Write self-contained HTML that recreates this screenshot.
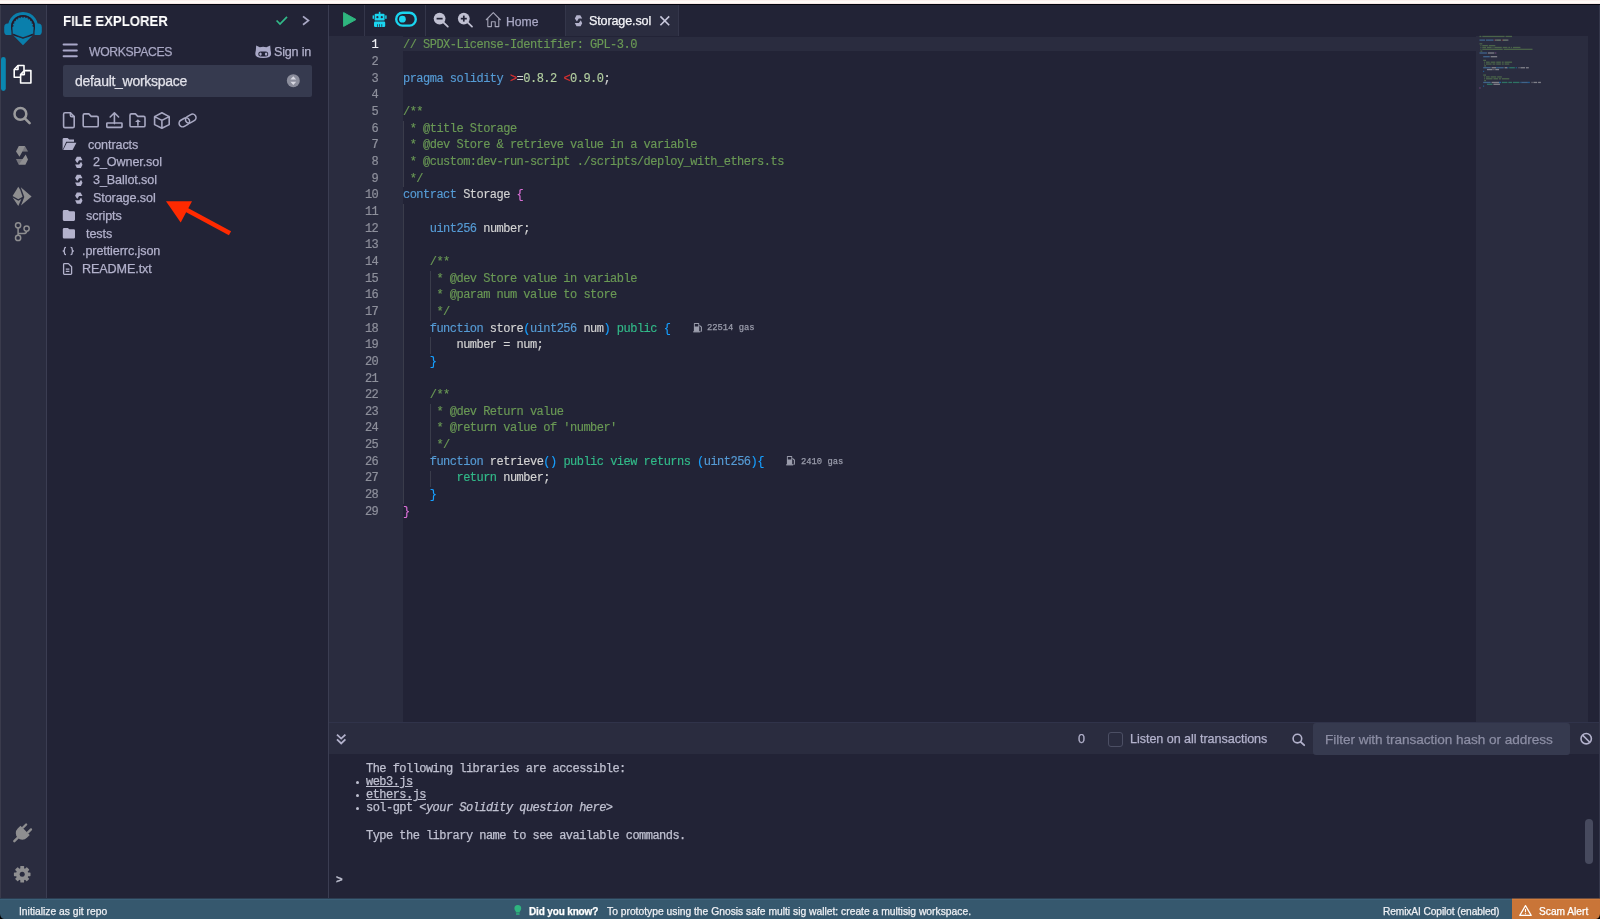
<!DOCTYPE html>
<html><head><meta charset="utf-8">
<style>
*{margin:0;padding:0;box-sizing:border-box}
html,body{width:1600px;height:919px;overflow:hidden;background:#222336;font-family:"Liberation Sans",sans-serif;color:#babbcc}
.abs{position:absolute}
.t{position:absolute;white-space:pre;will-change:transform;-webkit-text-stroke:0.25px currentColor}
#topstrip{left:0;top:0;width:1600px;height:4px;background:linear-gradient(#fcf0ee 0,#fcf0ee 1px,#fefaf7 1px,#fefaf7 3px,#f6e6e4 3px)}
#topline{left:0;top:4px;width:1600px;height:1px;background:#03030d}
#iconpanel{left:0;top:5px;width:46px;height:893px;background:#2a2c3f}
#iconedge{left:0;top:5px;width:1px;height:893px;background:#3a3b4c}
#iconborder{left:46px;top:5px;width:1px;height:893px;background:#3b3d52}
#sideborder{left:328px;top:5px;width:1px;height:893px;background:#3b3d52}
#statusbar{left:0;top:898px;width:1600px;height:21px;background:#36586e}
#scam{left:1512px;top:898px;width:88px;height:21px;background:#c97538}
#gutter{left:329px;top:36px;width:74px;height:686px;background:#2a2c3f}
#minimap{left:1476px;top:36px;width:112px;height:686px;background:#2a2c3f}
#linehl{left:403px;top:37px;width:1073px;height:14px;background:#2a2c3f}
#termbar{left:329px;top:722px;width:1271px;height:32px;background:#2a2c3f;border-top:1px solid #30334a}
#tab{left:565px;top:5px;width:114px;height:31px;background:#2a2c3f;border-left:1px solid #34364a;border-right:1px solid #34364a}
#select{left:63px;top:64.5px;width:248.5px;height:32px;background:#363a4f;border-radius:2px}
#filter{left:1313px;top:722.5px;width:257px;height:32px;background:#363a4f;border-radius:3px}
#chk{left:1108px;top:731.5px;width:15px;height:15px;border:1px solid #4c4f64;border-radius:3px}
#thumb{left:1585px;top:819px;width:7.5px;height:44.5px;background:#474a5e;border-radius:4px}
.div1{position:absolute;top:5px;width:1px;height:31px;background:#34364a}
.cl{position:absolute;will-change:transform;-webkit-text-stroke:0.15px currentColor;left:403.3px;font-family:"Liberation Mono",monospace;font-size:12px;letter-spacing:-0.52px;line-height:16.66px;white-space:pre}
.ln{position:absolute;will-change:transform;-webkit-text-stroke:0.2px currentColor;left:340px;width:38.3px;text-align:right;font-family:"Liberation Mono",monospace;font-size:12px;letter-spacing:-0.52px;line-height:16.66px}
</style></head><body>
<div id="topstrip" class="abs"></div>
<div id="topline" class="abs"></div>
<div id="iconpanel" class="abs"></div>
<div id="iconedge" class="abs"></div>
<div id="iconborder" class="abs"></div>
<div id="sideborder" class="abs"></div>
<div id="gutter" class="abs"></div>
<div id="minimap" class="abs"></div>
<div id="linehl" class="abs"></div>
<div id="termbar" class="abs"></div>
<div id="statusbar" class="abs"></div>
<div id="scam" class="abs"></div>
<div id="tab" class="abs"></div>
<div class="abs" style="left:1599px;top:5px;width:1px;height:893px;background:#34364a"></div>
<div class="abs" style="left:0;top:898px;width:1512px;height:1px;background:#2c3e52"></div>
<div class="abs" style="left:1512px;top:898px;width:88px;height:1px;background:#6f4e3e"></div>
<div class="abs" style="left:0;top:899px;width:1512px;height:1px;background:#3b6079"></div>
<div class="abs" style="left:1512px;top:899px;width:88px;height:1px;background:#d47d3c"></div>
<div class="div1" style="left:364px"></div>
<div class="div1" style="left:424.5px"></div>
<div id="select" class="abs"></div>
<div id="filter" class="abs"></div>
<div id="chk" class="abs"></div>
<div id="thumb" class="abs"></div>
<div class="abs" style="left:403px;top:120.6px;width:1px;height:66.6px;background:#3a3c4b"></div>
<div class="abs" style="left:403px;top:203.9px;width:1px;height:299.9px;background:#3a3c4b"></div>
<div class="abs" style="left:430px;top:270.5px;width:1px;height:50.0px;background:#3a3c4b"></div>
<div class="abs" style="left:430px;top:337.2px;width:1px;height:16.7px;background:#3a3c4b"></div>
<div class="abs" style="left:430px;top:403.8px;width:1px;height:50.0px;background:#3a3c4b"></div>
<div class="abs" style="left:430px;top:470.5px;width:1px;height:16.7px;background:#3a3c4b"></div>
<div class="cl" style="top:37.30px"><span style="color:#6a9955">// SPDX-License-Identifier: GPL-3.0</span></div>
<div class="ln" style="top:37.30px;color:#f0f0f5">1</div>
<div class="cl" style="top:53.96px"></div>
<div class="ln" style="top:53.96px;color:#8e909c">2</div>
<div class="cl" style="top:70.62px"><span style="color:#569cd6">pragma</span><span style="color:#d4d4d4"> </span><span style="color:#569cd6">solidity</span><span style="color:#d4d4d4"> </span><span style="color:#e03030">&gt;</span><span style="color:#d4d4d4">=</span><span style="color:#b3cfa0">0.8.2</span><span style="color:#d4d4d4"> </span><span style="color:#e03030">&lt;</span><span style="color:#b3cfa0">0.9.0</span><span style="color:#d4d4d4">;</span></div>
<div class="ln" style="top:70.62px;color:#8e909c">3</div>
<div class="cl" style="top:87.28px"></div>
<div class="ln" style="top:87.28px;color:#8e909c">4</div>
<div class="cl" style="top:103.94px"><span style="color:#6a9955">/**</span></div>
<div class="ln" style="top:103.94px;color:#8e909c">5</div>
<div class="cl" style="top:120.60px"><span style="color:#6a9955"> * @title Storage</span></div>
<div class="ln" style="top:120.60px;color:#8e909c">6</div>
<div class="cl" style="top:137.26px"><span style="color:#6a9955"> * @dev Store &amp; retrieve value in a variable</span></div>
<div class="ln" style="top:137.26px;color:#8e909c">7</div>
<div class="cl" style="top:153.92px"><span style="color:#6a9955"> * @custom:dev-run-script ./scripts/deploy_with_ethers.ts</span></div>
<div class="ln" style="top:153.92px;color:#8e909c">8</div>
<div class="cl" style="top:170.58px"><span style="color:#6a9955"> */</span></div>
<div class="ln" style="top:170.58px;color:#8e909c">9</div>
<div class="cl" style="top:187.24px"><span style="color:#569cd6">contract</span><span style="color:#d4d4d4"> </span><span style="color:#d4d4d4">Storage</span><span style="color:#d4d4d4"> </span><span style="color:#da70d6">{</span></div>
<div class="ln" style="top:187.24px;color:#8e909c">10</div>
<div class="cl" style="top:203.90px"></div>
<div class="ln" style="top:203.90px;color:#8e909c">11</div>
<div class="cl" style="top:220.56px"><span style="color:#d4d4d4">    </span><span style="color:#569cd6">uint256</span><span style="color:#d4d4d4"> number;</span></div>
<div class="ln" style="top:220.56px;color:#8e909c">12</div>
<div class="cl" style="top:237.22px"></div>
<div class="ln" style="top:237.22px;color:#8e909c">13</div>
<div class="cl" style="top:253.88px"><span style="color:#6a9955">    /**</span></div>
<div class="ln" style="top:253.88px;color:#8e909c">14</div>
<div class="cl" style="top:270.54px"><span style="color:#6a9955">     * @dev Store value in variable</span></div>
<div class="ln" style="top:270.54px;color:#8e909c">15</div>
<div class="cl" style="top:287.20px"><span style="color:#6a9955">     * @param num value to store</span></div>
<div class="ln" style="top:287.20px;color:#8e909c">16</div>
<div class="cl" style="top:303.86px"><span style="color:#6a9955">     */</span></div>
<div class="ln" style="top:303.86px;color:#8e909c">17</div>
<div class="cl" style="top:320.52px"><span style="color:#d4d4d4">    </span><span style="color:#569cd6">function</span><span style="color:#d4d4d4"> store</span><span style="color:#179fff">(</span><span style="color:#569cd6">uint256</span><span style="color:#d4d4d4"> num</span><span style="color:#179fff">)</span><span style="color:#d4d4d4"> </span><span style="color:#32ba89">public</span><span style="color:#d4d4d4"> </span><span style="color:#179fff">{</span></div>
<div class="ln" style="top:320.52px;color:#8e909c">18</div>
<div class="cl" style="top:337.18px"><span style="color:#d4d4d4">        number = num;</span></div>
<div class="ln" style="top:337.18px;color:#8e909c">19</div>
<div class="cl" style="top:353.84px"><span style="color:#d4d4d4">    </span><span style="color:#179fff">}</span></div>
<div class="ln" style="top:353.84px;color:#8e909c">20</div>
<div class="cl" style="top:370.50px"></div>
<div class="ln" style="top:370.50px;color:#8e909c">21</div>
<div class="cl" style="top:387.16px"><span style="color:#6a9955">    /**</span></div>
<div class="ln" style="top:387.16px;color:#8e909c">22</div>
<div class="cl" style="top:403.82px"><span style="color:#6a9955">     * @dev Return value</span></div>
<div class="ln" style="top:403.82px;color:#8e909c">23</div>
<div class="cl" style="top:420.48px"><span style="color:#6a9955">     * @return value of 'number'</span></div>
<div class="ln" style="top:420.48px;color:#8e909c">24</div>
<div class="cl" style="top:437.14px"><span style="color:#6a9955">     */</span></div>
<div class="ln" style="top:437.14px;color:#8e909c">25</div>
<div class="cl" style="top:453.80px"><span style="color:#d4d4d4">    </span><span style="color:#569cd6">function</span><span style="color:#d4d4d4"> retrieve</span><span style="color:#179fff">()</span><span style="color:#d4d4d4"> </span><span style="color:#32ba89">public</span><span style="color:#d4d4d4"> </span><span style="color:#32ba89">view</span><span style="color:#d4d4d4"> </span><span style="color:#32ba89">returns</span><span style="color:#d4d4d4"> </span><span style="color:#179fff">(</span><span style="color:#569cd6">uint256</span><span style="color:#179fff">)</span><span style="color:#179fff">{</span></div>
<div class="ln" style="top:453.80px;color:#8e909c">26</div>
<div class="cl" style="top:470.46px"><span style="color:#d4d4d4">        </span><span style="color:#32ba89">return</span><span style="color:#d4d4d4"> number;</span></div>
<div class="ln" style="top:470.46px;color:#8e909c">27</div>
<div class="cl" style="top:487.12px"><span style="color:#d4d4d4">    </span><span style="color:#179fff">}</span></div>
<div class="ln" style="top:487.12px;color:#8e909c">28</div>
<div class="cl" style="top:503.78px"><span style="color:#da70d6">}</span></div>
<div class="ln" style="top:503.78px;color:#8e909c">29</div>
<svg class="abs" style="left:692.7px;top:322.7px" width="11" height="10" viewBox="0 0 11 10"><path d="M0.9 0.6Q0.9 0 1.5 0h4.1Q6.2 0 6.2 0.6v8.2H0.9z M1.8 1v2.4h3.5V1z" fill="#9a9cab" fill-rule="evenodd"/><path d="M6.4 2.4l2 1.6v3.6q0 1-0.9 1" stroke="#9a9cab" stroke-width="1.1" fill="none"/><rect x="0.2" y="8.2" width="6.8" height="1.2" fill="#9a9cab"/></svg><div class="t" style="left:707.10px;top:322.38px;font-size:8.8px;line-height:13.2px;color:#9a9cab;font-family:'Liberation Mono',monospace">22514 gas</div><svg class="abs" style="left:786.2px;top:456.0px" width="11" height="10" viewBox="0 0 11 10"><path d="M0.9 0.6Q0.9 0 1.5 0h4.1Q6.2 0 6.2 0.6v8.2H0.9z M1.8 1v2.4h3.5V1z" fill="#9a9cab" fill-rule="evenodd"/><path d="M6.4 2.4l2 1.6v3.6q0 1-0.9 1" stroke="#9a9cab" stroke-width="1.1" fill="none"/><rect x="0.2" y="8.2" width="6.8" height="1.2" fill="#9a9cab"/></svg><div class="t" style="left:800.62px;top:455.66px;font-size:8.8px;line-height:13.2px;color:#9a9cab;font-family:'Liberation Mono',monospace">2410 gas</div>
<svg class="abs" style="left:0;top:0" width="1600" height="919" opacity="0.5"><rect x="1479.50" y="35.80" width="1.86" height="1.3" fill="#6a9955"/><rect x="1482.29" y="35.80" width="22.32" height="1.3" fill="#6a9955"/><rect x="1505.54" y="35.80" width="6.51" height="1.3" fill="#6a9955"/><rect x="1479.50" y="39.48" width="5.58" height="1.3" fill="#569cd6"/><rect x="1486.01" y="39.48" width="7.44" height="1.3" fill="#569cd6"/><rect x="1494.38" y="39.48" width="0.93" height="1.3" fill="#e03030"/><rect x="1495.31" y="39.48" width="0.93" height="1.3" fill="#d4d4d4"/><rect x="1496.24" y="39.48" width="4.65" height="1.3" fill="#b3cfa0"/><rect x="1501.82" y="39.48" width="0.93" height="1.3" fill="#e03030"/><rect x="1502.75" y="39.48" width="4.65" height="1.3" fill="#b3cfa0"/><rect x="1507.40" y="39.48" width="0.93" height="1.3" fill="#d4d4d4"/><rect x="1479.50" y="43.16" width="2.79" height="1.3" fill="#6a9955"/><rect x="1480.43" y="45.00" width="0.93" height="1.3" fill="#6a9955"/><rect x="1482.29" y="45.00" width="5.58" height="1.3" fill="#6a9955"/><rect x="1488.80" y="45.00" width="6.51" height="1.3" fill="#6a9955"/><rect x="1480.43" y="46.84" width="0.93" height="1.3" fill="#6a9955"/><rect x="1482.29" y="46.84" width="3.72" height="1.3" fill="#6a9955"/><rect x="1486.94" y="46.84" width="4.65" height="1.3" fill="#6a9955"/><rect x="1492.52" y="46.84" width="0.93" height="1.3" fill="#6a9955"/><rect x="1494.38" y="46.84" width="7.44" height="1.3" fill="#6a9955"/><rect x="1502.75" y="46.84" width="4.65" height="1.3" fill="#6a9955"/><rect x="1508.33" y="46.84" width="1.86" height="1.3" fill="#6a9955"/><rect x="1511.12" y="46.84" width="0.93" height="1.3" fill="#6a9955"/><rect x="1512.98" y="46.84" width="7.44" height="1.3" fill="#6a9955"/><rect x="1480.43" y="48.68" width="0.93" height="1.3" fill="#6a9955"/><rect x="1482.29" y="48.68" width="20.46" height="1.3" fill="#6a9955"/><rect x="1503.68" y="48.68" width="28.83" height="1.3" fill="#6a9955"/><rect x="1480.43" y="50.52" width="1.86" height="1.3" fill="#6a9955"/><rect x="1479.50" y="52.36" width="7.44" height="1.3" fill="#569cd6"/><rect x="1487.87" y="52.36" width="6.51" height="1.3" fill="#d4d4d4"/><rect x="1495.31" y="52.36" width="0.93" height="1.3" fill="#da70d6"/><rect x="1483.22" y="56.04" width="6.51" height="1.3" fill="#569cd6"/><rect x="1490.66" y="56.04" width="6.51" height="1.3" fill="#d4d4d4"/><rect x="1483.22" y="59.72" width="2.79" height="1.3" fill="#6a9955"/><rect x="1484.15" y="61.56" width="0.93" height="1.3" fill="#6a9955"/><rect x="1486.01" y="61.56" width="3.72" height="1.3" fill="#6a9955"/><rect x="1490.66" y="61.56" width="4.65" height="1.3" fill="#6a9955"/><rect x="1496.24" y="61.56" width="4.65" height="1.3" fill="#6a9955"/><rect x="1501.82" y="61.56" width="1.86" height="1.3" fill="#6a9955"/><rect x="1504.61" y="61.56" width="7.44" height="1.3" fill="#6a9955"/><rect x="1484.15" y="63.40" width="0.93" height="1.3" fill="#6a9955"/><rect x="1486.01" y="63.40" width="5.58" height="1.3" fill="#6a9955"/><rect x="1492.52" y="63.40" width="2.79" height="1.3" fill="#6a9955"/><rect x="1496.24" y="63.40" width="4.65" height="1.3" fill="#6a9955"/><rect x="1501.82" y="63.40" width="1.86" height="1.3" fill="#6a9955"/><rect x="1504.61" y="63.40" width="4.65" height="1.3" fill="#6a9955"/><rect x="1484.15" y="65.24" width="1.86" height="1.3" fill="#6a9955"/><rect x="1483.22" y="67.08" width="7.44" height="1.3" fill="#569cd6"/><rect x="1491.59" y="67.08" width="4.65" height="1.3" fill="#d4d4d4"/><rect x="1496.24" y="67.08" width="0.93" height="1.3" fill="#179fff"/><rect x="1497.17" y="67.08" width="6.51" height="1.3" fill="#569cd6"/><rect x="1504.61" y="67.08" width="2.79" height="1.3" fill="#d4d4d4"/><rect x="1507.40" y="67.08" width="0.93" height="1.3" fill="#179fff"/><rect x="1509.26" y="67.08" width="5.58" height="1.3" fill="#32ba89"/><rect x="1515.77" y="67.08" width="0.93" height="1.3" fill="#179fff"/><rect x="1518.56" y="67.08" width="0.93" height="1.3" fill="#d4d4d4"/><rect x="1520.42" y="67.08" width="4.65" height="1.3" fill="#d4d4d4"/><rect x="1526.00" y="67.08" width="2.79" height="1.3" fill="#d4d4d4"/><rect x="1486.94" y="68.92" width="5.58" height="1.3" fill="#d4d4d4"/><rect x="1493.45" y="68.92" width="0.93" height="1.3" fill="#d4d4d4"/><rect x="1495.31" y="68.92" width="3.72" height="1.3" fill="#d4d4d4"/><rect x="1483.22" y="70.76" width="0.93" height="1.3" fill="#179fff"/><rect x="1483.22" y="74.44" width="2.79" height="1.3" fill="#6a9955"/><rect x="1484.15" y="76.28" width="0.93" height="1.3" fill="#6a9955"/><rect x="1486.01" y="76.28" width="3.72" height="1.3" fill="#6a9955"/><rect x="1490.66" y="76.28" width="5.58" height="1.3" fill="#6a9955"/><rect x="1497.17" y="76.28" width="4.65" height="1.3" fill="#6a9955"/><rect x="1484.15" y="78.12" width="0.93" height="1.3" fill="#6a9955"/><rect x="1486.01" y="78.12" width="6.51" height="1.3" fill="#6a9955"/><rect x="1493.45" y="78.12" width="4.65" height="1.3" fill="#6a9955"/><rect x="1499.03" y="78.12" width="1.86" height="1.3" fill="#6a9955"/><rect x="1501.82" y="78.12" width="7.44" height="1.3" fill="#6a9955"/><rect x="1484.15" y="79.96" width="1.86" height="1.3" fill="#6a9955"/><rect x="1483.22" y="81.80" width="7.44" height="1.3" fill="#569cd6"/><rect x="1491.59" y="81.80" width="7.44" height="1.3" fill="#d4d4d4"/><rect x="1499.03" y="81.80" width="1.86" height="1.3" fill="#179fff"/><rect x="1501.82" y="81.80" width="5.58" height="1.3" fill="#32ba89"/><rect x="1508.33" y="81.80" width="3.72" height="1.3" fill="#32ba89"/><rect x="1512.98" y="81.80" width="6.51" height="1.3" fill="#32ba89"/><rect x="1520.42" y="81.80" width="0.93" height="1.3" fill="#179fff"/><rect x="1521.35" y="81.80" width="6.51" height="1.3" fill="#569cd6"/><rect x="1527.86" y="81.80" width="0.93" height="1.3" fill="#179fff"/><rect x="1528.79" y="81.80" width="0.93" height="1.3" fill="#179fff"/><rect x="1531.58" y="81.80" width="0.93" height="1.3" fill="#d4d4d4"/><rect x="1533.44" y="81.80" width="3.72" height="1.3" fill="#d4d4d4"/><rect x="1538.09" y="81.80" width="2.79" height="1.3" fill="#d4d4d4"/><rect x="1486.94" y="83.64" width="5.58" height="1.3" fill="#32ba89"/><rect x="1493.45" y="83.64" width="6.51" height="1.3" fill="#d4d4d4"/><rect x="1483.22" y="85.48" width="0.93" height="1.3" fill="#179fff"/><rect x="1479.50" y="87.32" width="0.93" height="1.3" fill="#da70d6"/></svg>
<div class="t" style="left:62.90px;top:10.05px;font-size:15px;line-height:22.5px;color:#ffffff;font-family:'Liberation Sans',sans-serif;font-weight:bold;transform:scaleX(0.88);transform-origin:0 0;-webkit-text-stroke:0">FILE EXPLORER</div>
<div class="t" style="left:88.70px;top:43.02px;font-size:12.2px;line-height:18.3px;color:#a9a8c4;font-family:'Liberation Sans',sans-serif;letter-spacing:-0.35px">WORKSPACES</div>
<div class="t" style="left:274.40px;top:42.88px;font-size:12.6px;line-height:18.9px;color:#b3b2cc;font-family:'Liberation Sans',sans-serif;letter-spacing:-0.2px">Sign in</div>
<div class="t" style="left:74.90px;top:70.95px;font-size:14px;line-height:21.0px;color:#e2e2ea;font-family:'Liberation Sans',sans-serif;letter-spacing:-0.28px">default_workspace</div>
<div class="t" style="left:87.80px;top:136.18px;font-size:12.6px;line-height:18.9px;color:#b3b2cc;font-family:'Liberation Sans',sans-serif;letter-spacing:-0.1px">contracts</div>
<div class="t" style="left:93.10px;top:153.28px;font-size:12.6px;line-height:18.9px;color:#b3b2cc;font-family:'Liberation Sans',sans-serif;letter-spacing:-0.1px">2_Owner.sol</div>
<div class="t" style="left:93.10px;top:171.28px;font-size:12.6px;line-height:18.9px;color:#b3b2cc;font-family:'Liberation Sans',sans-serif;letter-spacing:-0.1px">3_Ballot.sol</div>
<div class="t" style="left:93.10px;top:189.08px;font-size:12.6px;line-height:18.9px;color:#b3b2cc;font-family:'Liberation Sans',sans-serif;letter-spacing:-0.1px">Storage.sol</div>
<div class="t" style="left:86.00px;top:207.18px;font-size:12.6px;line-height:18.9px;color:#b3b2cc;font-family:'Liberation Sans',sans-serif;letter-spacing:-0.1px">scripts</div>
<div class="t" style="left:86.00px;top:224.68px;font-size:12.6px;line-height:18.9px;color:#b3b2cc;font-family:'Liberation Sans',sans-serif;letter-spacing:-0.1px">tests</div>
<div class="t" style="left:82.00px;top:241.88px;font-size:12.6px;line-height:18.9px;color:#b3b2cc;font-family:'Liberation Sans',sans-serif;letter-spacing:-0.1px">.prettierrc.json</div>
<div class="t" style="left:82.00px;top:260.28px;font-size:12.6px;line-height:18.9px;color:#b3b2cc;font-family:'Liberation Sans',sans-serif;letter-spacing:-0.1px">README.txt</div>
<div class="t" style="left:505.90px;top:12.72px;font-size:12.2px;line-height:18.3px;color:#a9a8c4;font-family:'Liberation Sans',sans-serif">Home</div>
<div class="t" style="left:589.10px;top:12.28px;font-size:12.6px;line-height:18.9px;color:#f4f4f8;font-family:'Liberation Sans',sans-serif;letter-spacing:-0.15px">Storage.sol</div>
<div class="t" style="left:1078.20px;top:729.88px;font-size:12.6px;line-height:18.9px;color:#b3b2cc;font-family:'Liberation Sans',sans-serif">0</div>
<div class="t" style="left:1130.20px;top:729.58px;font-size:12.6px;line-height:18.9px;color:#b3b2cc;font-family:'Liberation Sans',sans-serif;letter-spacing:-0.05px">Listen on all transactions</div>
<div class="t" style="left:1325.00px;top:729.59px;font-size:13.6px;line-height:20.4px;color:#8c8ea4;font-family:'Liberation Sans',sans-serif;letter-spacing:-0.05px">Filter with transaction hash or address</div>
<div class="t" style="left:365.90px;top:762.71px;font-size:12px;line-height:13px;color:#bfc0d0;font-family:'Liberation Mono',monospace;letter-spacing:-0.54px">The following libraries are accessible:</div>
<div class="t" style="left:365.90px;top:776.01px;font-size:12px;line-height:13px;color:#bfc0d0;font-family:'Liberation Mono',monospace;letter-spacing:-0.54px"><u>web3.js</u></div>
<div class="t" style="left:365.90px;top:789.11px;font-size:12px;line-height:13px;color:#bfc0d0;font-family:'Liberation Mono',monospace;letter-spacing:-0.54px"><u>ethers.js</u></div>
<div class="t" style="left:365.90px;top:802.21px;font-size:12px;line-height:13px;color:#bfc0d0;font-family:'Liberation Mono',monospace;letter-spacing:-0.54px">sol-gpt <i>&lt;your Solidity question here&gt;</i></div>
<div class="t" style="left:365.90px;top:830.21px;font-size:12px;line-height:13px;color:#bfc0d0;font-family:'Liberation Mono',monospace;letter-spacing:-0.54px">Type the library name to see available commands.</div>
<div class="abs" style="left:355.8px;top:780.6px;width:3.4px;height:3.4px;border-radius:50%;background:#bfc0d0"></div>
<div class="abs" style="left:355.8px;top:793.7px;width:3.4px;height:3.4px;border-radius:50%;background:#bfc0d0"></div>
<div class="abs" style="left:355.8px;top:806.8px;width:3.4px;height:3.4px;border-radius:50%;background:#bfc0d0"></div>
<div class="t" style="left:336.00px;top:874.05px;font-size:11.1px;line-height:13px;color:#bfc0d0;font-family:'Liberation Mono',monospace;font-weight:bold">&gt;</div>
<div class="t" style="left:18.60px;top:903.71px;font-size:10.3px;line-height:15.45px;color:#eef0f4;font-family:'Liberation Sans',sans-serif">Initialize as git repo</div>
<div class="t" style="left:529.00px;top:904.04px;font-size:10px;line-height:15.0px;color:#ffffff;font-family:'Liberation Sans',sans-serif;font-weight:bold;letter-spacing:-0.15px">Did you know?</div>
<div class="t" style="left:607.00px;top:903.71px;font-size:10.3px;line-height:15.45px;color:#eef0f4;font-family:'Liberation Sans',sans-serif">To prototype using the Gnosis safe multi sig wallet: create a multisig workspace.</div>
<div class="t" style="left:1382.50px;top:903.82px;font-size:10.2px;line-height:15.3px;color:#eef0f4;font-family:'Liberation Sans',sans-serif;letter-spacing:-0.1px">RemixAI Copilot (enabled)</div>
<div class="t" style="left:1539.00px;top:903.82px;font-size:10.2px;line-height:15.3px;color:#ffffff;font-family:'Liberation Sans',sans-serif">Scam Alert</div>
<!-- ICONS -->
<svg class="abs" style="left:0;top:0" width="1600" height="919">
 <!-- logo -->
 <g fill="#0a7fac">
  <path d="M10.17 31.5 A13.6 13.6 0 1 1 35.83 31.5" stroke="#0a7fac" stroke-width="3" fill="none"/>
  <path d="M4.2 27.2 Q4.2 23.6 7.6 23.6 H11.4 V35 H7.6 Q4.2 35 4.2 31.4 Z"/>
  <path d="M41.8 27.2 Q41.8 23.6 38.4 23.6 H34.6 V35 H38.4 Q41.8 35 41.8 31.4 Z"/>
  <circle cx="23" cy="27.2" r="11.3" stroke="#22192a" stroke-width="1.3" fill="none"/>
  <path d="M12.40 27.20 L13.79 25.88 L12.83 24.21 L14.54 23.34 L14.08 21.47 L15.97 21.11 L16.06 19.19 L17.97 19.38 L18.60 17.56 L20.38 18.28 L21.49 16.71 L23.00 17.90 L24.51 16.71 L25.62 18.28 L27.40 17.56 L28.03 19.38 L29.94 19.19 L30.03 21.11 L31.92 21.47 L31.46 23.34 L33.17 24.21 L32.21 25.88 L33.60 27.20 L33.3 33.6 L23 37.2 L12.7 33.6 Z"/>
  <path d="M13.4 35.4 L23 38.8 L32.6 35.4 L23 45.3 Z"/>
 </g>
 <!-- active bar -->
 <rect x="1" y="57" width="4.8" height="34" rx="2.4" fill="#0a87b0"/>
 <!-- copy icon -->
 <g stroke="#ffffff" stroke-width="1.6" fill="none" stroke-linejoin="round">
  <path d="M20.6 74.6 L24.3 70.6 H30.9 V83 H20.6 Z"/>
  <path d="M24.3 70.6 V74.6 H20.6"/>
  <path d="M20.6 77.3 H14.2 V69.5 L18 65.5 H24 V70.6"/>
  <path d="M18 65.5 V69.5 H14.2"/>
 </g>
 <!-- search -->
 <circle cx="20.4" cy="113.9" r="5.9" stroke="#9b9b9d" stroke-width="2.5" fill="none"/>
 <path d="M24.8 118.3 L29.6 123.1" stroke="#9b9b9d" stroke-width="2.6" stroke-linecap="round"/>
 <!-- solidity -->
 <g fill="#8e8e91"><polygon points="18.80,145.90 24.90,145.90 28.00,151.61 22.40,151.61 19.50,156.69 16.00,151.40"/><polygon points="18.80,164.80 25.40,164.80 28.00,159.60 25.70,154.41 22.60,159.09 16.00,159.09"/><polygon points="24.90,145.90 28.00,151.61 22.40,151.61" fill="#2a2c3f" opacity="0.25"/><polygon points="16.00,159.09 22.60,159.09 18.80,164.80" fill="#2a2c3f" opacity="0.25"/></g>
 <!-- deploy -->
 <g fill="#8e8e90">
  <path d="M18.3 186.8 L12.6 196 L18.3 199.3 L22.6 196.8 L20.2 189.8 Z"/>
  <path d="M12.6 197.4 L18.3 200.8 L21.4 199 L18.3 205.9 Z"/>
  <path d="M20.8 187.2 L31.6 196.4 L21 205.6 L24.3 197 Z"/>
 </g>
 <!-- git -->
 <g stroke="#8e8e90" stroke-width="1.5" fill="none">
  <circle cx="18.1" cy="225.3" r="2.6"/>
  <circle cx="26.6" cy="228.6" r="2.6"/>
  <circle cx="18.1" cy="237.9" r="2.6"/>
  <path d="M18.1 227.9 V235.3"/>
  <path d="M18.1 233.6 H23.5 Q26.6 233.6 26.6 231.2"/>
 </g>
 <!-- plug -->
 <g transform="translate(22.3 833.2) rotate(45)" fill="#8e8e90">
  <rect x="-4.6" y="-10" width="2.3" height="6.5" rx="1.1"/>
  <rect x="2.3" y="-10" width="2.3" height="6.5" rx="1.1"/>
  <path d="M-6.5 -4 H6.5 V0 A6.5 6.5 0 0 1 -6.5 0 Z"/>
  <rect x="-1.2" y="5" width="2.4" height="7.5" rx="1.2"/>
 </g>
 <!-- gear -->
 <g transform="translate(22.2 874.3)" fill="#8e8e90">
  <circle r="6.2"/>
  <rect x="-1.9" y="-8.3" width="3.8" height="16.6" rx="0.6"/>
  <rect x="-1.9" y="-8.3" width="3.8" height="16.6" rx="0.6" transform="rotate(45)"/>
  <rect x="-1.9" y="-8.3" width="3.8" height="16.6" rx="0.6" transform="rotate(90)"/>
  <rect x="-1.9" y="-8.3" width="3.8" height="16.6" rx="0.6" transform="rotate(135)"/>
  <circle r="2.5" fill="#2a2c3f"/>
 </g>

 <!-- check + chevron -->
 <path d="M276.6 20.5 L280 24 L287 16.8" stroke="#32ba89" stroke-width="1.7" fill="none"/>
 <path d="M303 16.4 L308.4 20.6 L303 24.8" stroke="#a9a8c4" stroke-width="1.8" fill="none"/>
 <!-- hamburger -->
 <g fill="#a9a8c9">
  <rect x="62.6" y="43.6" width="15.2" height="2" rx="1"/>
  <rect x="62.6" y="49.4" width="15.2" height="2" rx="1"/>
  <rect x="62.6" y="55.2" width="15.2" height="2" rx="1"/>
 </g>
 <!-- github -->
 <g fill="#aaa9c8">
  <path d="M255.8 50.4 L256.2 45.6 L259.8 47.2 Q263.1 46.4 266.4 47.2 L270.2 45.6 L270.6 50.4 Q271.1 52 271.1 54 Q271.1 58.1 263.2 58.1 Q255.3 58.1 255.3 54 Q255.3 52 255.8 50.4 Z"/>
  <rect x="258.3" y="51.6" width="9.9" height="5" rx="2.5" fill="#222336"/>
  <ellipse cx="260.5" cy="54.1" rx="1.2" ry="1.6"/>
  <ellipse cx="266.1" cy="54.1" rx="1.2" ry="1.6"/>
 </g>
 <!-- select arrows -->
 <circle cx="293.3" cy="80.7" r="6.5" fill="#8b8d9c"/>
 <path d="M290.4 79.6 L293.3 76.3 L296.2 79.6 Z M290.4 81.8 L293.3 85.1 L296.2 81.8 Z" fill="#d8d8e2"/>
 <!-- toolbar icons -->
 <g stroke="#a8a8c2" stroke-width="1.6" fill="none" stroke-linejoin="round" stroke-linecap="round">
  <path d="M65 112.8 H70.4 L74.2 116.6 V126.2 Q74.2 127.6 72.8 127.6 H65 Q63.6 127.6 63.6 126.2 V114.2 Q63.6 112.8 65 112.8 Z"/>
  <path d="M70.4 112.8 V115.2 Q70.4 116.6 71.8 116.6 H74.2"/>
  <path d="M84.6 113.9 H88.8 L91.2 116.4 H96.8 Q98.2 116.4 98.2 117.8 V125.4 Q98.2 126.8 96.8 126.8 H84.6 Q83.2 126.8 83.2 125.4 V115.3 Q83.2 113.9 84.6 113.9 Z"/>
  <path d="M107.4 123 H121.4 Q122 123 122 123.6 V126.8 Q122 127.4 121.4 127.4 H107.4 Q106.8 127.4 106.8 126.8 V123.6 Q106.8 123 107.4 123 Z"/>
  <path d="M114.4 123.6 V112.8 M110.2 117 L114.4 112.8 L118.6 117"/>
  <path d="M131.4 113.9 H135.4 L137.8 116.4 H143.6 Q145 116.4 145 117.8 V125.4 Q145 126.8 143.6 126.8 H131.4 Q130 126.8 130 125.4 V115.3 Q130 113.9 131.4 113.9 Z"/>
  <path d="M161.9 112.8 L169.2 116.6 V124.6 L161.9 128.2 L154.6 124.6 V116.6 Z M154.6 116.6 L161.9 120.4 L169.2 116.6 M161.9 120.4 V128.2"/>
  <g transform="translate(187.55 120.45) rotate(-30)">
   <rect x="-9.2" y="-3.5" width="11" height="7" rx="3.5"/>
   <rect x="-1.8" y="-3.5" width="11" height="7" rx="3.5"/>
  </g>
 </g>
 <path d="M137.9 125.8 V121.6" stroke="#a8a8c2" stroke-width="1.6"/>
 <path d="M135 122 L137.9 119.2 L140.8 122 Z" fill="#a8a8c2"/>
 <!-- tree icons -->
 <g fill="#b3b2cc">
  <path d="M62.6 139.4 Q62.6 138 64 138 H67.6 L69.2 139.6 H74 V141.8 H66.2 L62.6 149.9 Z"/>
  <path d="M66.8 142.8 H76.4 L72.6 149.9 H63.2 Z"/>
  <path d="M62.8 211.3 Q62.8 209.9 64.2 209.9 H67.8 L69.4 211.3 H73.8 Q75 211.3 75 212.5 V219.6 Q75 220.9 73.8 220.9 H64 Q62.8 220.9 62.8 219.6 Z"/>
  <path d="M62.8 229.3 Q62.8 227.9 64.2 227.9 H67.8 L69.4 229.3 H73.8 Q75 229.3 75 230.5 V237.2 Q75 238.5 73.8 238.5 H64 Q62.8 238.5 62.8 237.2 Z"/>
 </g>
 <g fill="#b3b2cc"><polygon points="76.82,156.80 80.59,156.80 82.50,160.15 79.04,160.15 77.26,163.14 75.10,160.03"/><polygon points="76.82,167.90 80.89,167.90 82.50,164.85 81.08,161.80 79.17,164.55 75.10,164.55"/><polygon points="76.82,174.80 80.59,174.80 82.50,178.15 79.04,178.15 77.26,181.14 75.10,178.03"/><polygon points="76.82,185.90 80.89,185.90 82.50,182.85 81.08,179.80 79.17,182.55 75.10,182.55"/><polygon points="76.82,192.60 80.59,192.60 82.50,195.95 79.04,195.95 77.26,198.94 75.10,195.83"/><polygon points="76.82,203.70 80.89,203.70 82.50,200.65 81.08,197.59 79.17,200.35 75.10,200.35"/><polygon points="576.52,15.20 580.29,15.20 582.20,18.52 578.74,18.52 576.96,21.48 574.80,18.40"/><polygon points="576.52,26.20 580.59,26.20 582.20,23.17 580.78,20.15 578.87,22.88 574.80,22.88"/></g>
 <g stroke="#b3b2cc" stroke-width="1.3" fill="none" stroke-linejoin="round">
  <path d="M66 247.4 Q64.4 247.4 64.4 249 V250 Q64.4 251 63.2 251 Q64.4 251 64.4 252 V253 Q64.4 254.6 66 254.6"/>
  <path d="M70.6 247.4 Q72.2 247.4 72.2 249 V250 Q72.2 251 73.4 251 Q72.2 251 72.2 252 V253 Q72.2 254.6 70.6 254.6"/>
  <path d="M64.4 263.6 H68.4 L71.6 266.8 V273.6 Q71.6 274.4 70.8 274.4 H64.4 Q63.6 274.4 63.6 273.6 V264.4 Q63.6 263.6 64.4 263.6 Z"/>
  <path d="M65.8 269.2 H69.4 M65.8 271.4 H69.4"/>
 </g>
 <!-- red arrow -->
 <path d="M230 233.2 L183.6 208.2" stroke="#ff2a00" stroke-width="4.6" stroke-linecap="butt"/>
 <path d="M166 201.2 L192 201.2 L180.7 222.4 Z" fill="#ff2a00"/>

 <!-- tab bar icons -->
 <path d="M343.6 12.6 L356 19.5 L343.6 26.4 Z" fill="#2fb57f" stroke="#2fb57f" stroke-width="1" stroke-linejoin="round"/>
 <g fill="#1ad5f0">
  <rect x="378.8" y="11.8" width="1.6" height="2.2"/>
  <rect x="374.6" y="13.8" width="10" height="6.8" rx="1.2"/>
  <rect x="372.6" y="15.4" width="1.4" height="3.4"/>
  <rect x="385.2" y="15.4" width="1.4" height="3.4"/>
  <rect x="374" y="21.6" width="11.2" height="5.4" rx="1.2"/>
 </g>
 <g fill="#2a2c3f">
  <circle cx="377.4" cy="17.2" r="1.1"/><circle cx="381.8" cy="17.2" r="1.1"/>
  <rect x="377" y="24.2" width="0.8" height="2.6"/><rect x="379.2" y="24.2" width="0.8" height="2.6"/><rect x="381.4" y="24.2" width="0.8" height="2.6"/>
 </g>
 <rect x="396.2" y="12.8" width="19.6" height="12.8" rx="6.4" stroke="#1ad5f0" stroke-width="2.4" fill="none"/>
 <circle cx="402.4" cy="19.2" r="3.4" fill="#1ad5f0"/>
 <g fill="#c0c0d2">
  <circle cx="439.6" cy="18.6" r="5.9"/>
  <path d="M443.4 22.4 L447.8 26.6" stroke="#c0c0d2" stroke-width="1.8" stroke-linecap="round"/>
  <circle cx="463.8" cy="18.6" r="5.9"/>
  <path d="M467.6 22.4 L472 26.6" stroke="#c0c0d2" stroke-width="1.8" stroke-linecap="round"/>
 </g>
 <g fill="#222336">
  <rect x="436.6" y="17.8" width="6" height="1.7"/>
  <rect x="460.8" y="17.8" width="6" height="1.7"/><rect x="462.95" y="15.6" width="1.7" height="6"/>
 </g>
 <path d="M486 20 L493.3 12.6 L500.6 20 M487.8 18.4 V26.6 H491.4 V21.8 H495.2 V26.6 H498.8 V18.4" stroke="#a4a4b6" stroke-width="1.1" fill="none" stroke-linejoin="round"/>
 <path d="M660.4 16.4 L669.2 25.2 M669.2 16.4 L660.4 25.2" stroke="#c8c8dc" stroke-width="1.6"/>

 <!-- terminal bar icons -->
 <path d="M337 734.6 L341.2 738.6 L345.4 734.6 M337 739.4 L341.2 743.4 L345.4 739.4" stroke="#b3b2cc" stroke-width="1.8" fill="none"/>
 <circle cx="1297.4" cy="738.6" r="4.3" stroke="#b3b2cc" stroke-width="1.6" fill="none"/>
 <path d="M1300.6 741.8 L1304.2 745.2" stroke="#b3b2cc" stroke-width="1.8" stroke-linecap="round"/>
 <circle cx="1586.2" cy="738.7" r="5.2" stroke="#b3b2cc" stroke-width="1.6" fill="none"/>
 <path d="M1582.6 735.1 L1589.8 742.3" stroke="#b3b2cc" stroke-width="1.6"/>

 <!-- corners -->
 <path d="M0 914 Q0.5 918.5 4 919 H0 Z" fill="#000"/>
 <path d="M1600 914 Q1599.5 918.5 1596 919 H1600 Z" fill="#000"/>
 <!-- status icons -->
 <g fill="#2fb57f">
  <path d="M517.8 905.1 A3.4 3.4 0 0 1 521.2 908.6 Q521.2 910.3 519.8 911.6 V912.6 H515.8 V911.6 Q514.4 910.3 514.4 908.6 A3.4 3.4 0 0 1 517.8 905.1 Z"/>
  <rect x="516" y="913.2" width="3.6" height="1.6" rx="0.6"/>
 </g>
 <path d="M1525.5 905.6 L1531.2 915.4 H1519.8 Z" stroke="#ffffff" stroke-width="1.2" fill="none" stroke-linejoin="round"/>
 <path d="M1525.5 909 V912.2 M1525.5 913.2 V914.2" stroke="#ffffff" stroke-width="1.1"/>
</svg>
</body></html>
